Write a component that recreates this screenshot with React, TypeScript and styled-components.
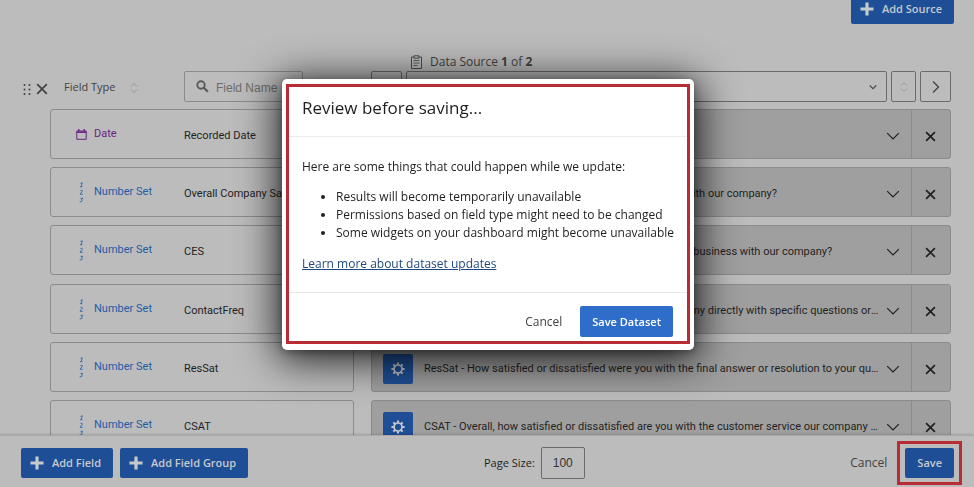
import React from "react";
import styled, { createGlobalStyle, css } from "styled-components";

const font = `"Open Sans", "Noto Sans", sans-serif`;
const rowFont = `Roboto, "Open Sans", sans-serif`;
const inputFont = `"Liberation Sans", Arial, sans-serif`;

const color = {
  page: "#bcbcbc",
  source: "#9f9f9f",
  line: "#8b8b8b",
  control: "#6b6b6b",
  text: "#1f1f1f",
  muted: "#424242",
  blue: "#1e4f96",
  link: "#205ca6",
  purple: "#6b2285",
  frame: "#b92c34",
};

const GlobalStyle = createGlobalStyle`
  *, *::before, *::after { box-sizing: border-box; }
  body { margin: 0; background: ${color.page}; overflow: hidden; }
  button, input, select { font: inherit; color: inherit; margin: 0; }
  button { cursor: pointer; }
`;

const Page = styled.div`
  display: flex;
  flex-direction: column;
  height: 100vh;
  background: ${color.page};
  color: ${color.text};
  font: 12px/18px ${font};
`;

const TopBar = styled.header`
  display: flex;
  justify-content: flex-end;
  align-items: flex-end;
  height: 24px;
  padding-right: 20px;
`;

const Primary = styled.button<{ $lit?: boolean }>`
  display: inline-flex;
  flex: none;
  align-items: center;
  gap: 8px;
  height: 30px;
  padding: 0 12px 0 9px;
  border: 0;
  border-radius: 2px;
  background: ${color.blue};
  color: #c6c9ce;
  font-size: 11px;
  font-weight: 600;
  white-space: nowrap;
  ${(p) =>
    p.$lit &&
    css`
      height: 31px;
      padding: 0 12px;
      background: #2f6dca;
      color: #fff;
    `}
`;

const Content = styled.main`
  flex: 1;
  min-height: 0;
  overflow: hidden;
  padding: 27px 23px 0 22px;
`;

const SourceCaption = styled.div`
  display: flex;
  align-items: center;
  gap: 8px;
  height: 20px;
  padding: 2px 0 0 389px;
  color: ${color.muted};
`;

const HeadRow = styled.div`
  display: grid;
  grid-template-columns: 28px 304px minmax(0, 1fr);
  height: 31px;
`;

const Handles = styled.div`
  display: flex;
  align-items: center;
  gap: 5px;
  padding-top: 5px;
  color: ${color.muted};
`;

const FieldHead = styled.div`
  display: flex;
  align-items: center;
  padding-left: 14px;
  color: ${color.muted};
`;

const FieldLabel = styled.span`
  width: 66px;
  font-size: 11px;
`;

const SortButton = styled.button`
  display: flex;
  padding: 3px 0 0;
  border: 0;
  background: none;
  color: #989898;
`;

const SearchBox = styled.label`
  display: flex;
  align-items: center;
  gap: 7px;
  width: 119px;
  height: 31px;
  margin-left: auto;
  margin-right: 51px;
  padding-left: 11px;
  border: 1px solid ${color.line};
  border-radius: 2px;
  color: #5a5a5a;
`;

const SearchInput = styled.input`
  flex: 1;
  width: 0;
  padding: 2px 0 0;
  border: 0;
  outline: 0;
  background: none;
  font: 12px/18px ${inputFont};
  &::placeholder { color: #6c6c6c; opacity: 1; }
`;

const SourceHead = styled.div`
  display: flex;
  gap: 4px;
  padding-left: 17px;
`;

const Square = styled.button<{ $narrow?: boolean }>`
  display: flex;
  flex: none;
  align-items: center;
  justify-content: center;
  width: ${(p) => (p.$narrow ? 25 : 31)}px;
  height: 31px;
  padding: 0;
  border: 1px solid ${color.control};
  border-radius: 2px;
  background: none;
  color: ${(p) => (p.$narrow ? "#989898" : "#444")};
`;

const SelectWrap = styled.label`
  display: grid;
  flex: 1;
  grid-template-columns: minmax(0, 1fr) 17px;
  align-items: center;
  height: 31px;
  border: 1px solid ${color.control};
  border-radius: 2px;
  color: #444;
  svg { grid-area: 1 / 2; pointer-events: none; }
`;

const Select = styled.select`
  grid-area: 1 / 1 / 2 / 3;
  height: 29px;
  padding: 0 10px;
  border: 0;
  appearance: none;
  background: none;
`;

const Rows = styled.ul`
  display: grid;
  gap: 8px;
  margin: 7px 0 0;
  padding: 0 0 0 28px;
  list-style: none;
  font: 11px/16px ${rowFont};
`;

const Row = styled.li`
  display: grid;
  grid-template-columns: 304px minmax(0, 1fr);
  column-gap: 17px;
  min-height: 50px;
  &:nth-child(3n) { margin-bottom: 1px; }
`;

const FieldCard = styled.div`
  display: grid;
  grid-template-columns: 43px 90px minmax(0, 1fr);
  align-items: center;
  border: 1px solid ${color.line};
  border-radius: 3px;
`;

const TypeIcon = styled.span<{ $date?: boolean }>`
  display: flex;
  justify-content: center;
  padding-left: ${(p) => (p.$date ? 18 : 17)}px;
`;

const TypeName = styled.span<{ $date?: boolean }>`
  color: ${(p) => (p.$date ? color.purple : color.link)};
`;

const FieldName = styled.span`
  padding-top: 4px;
  white-space: nowrap;
`;

const SourceCard = styled.div`
  display: grid;
  grid-template-columns: 30px minmax(0, 1fr) 30px 39px;
  align-items: stretch;
  padding-left: 11px;
  border: 1px solid ${color.line};
  border-radius: 3px;
  background: ${color.source};
`;

const Gear = styled.button`
  display: flex;
  align-items: center;
  justify-content: center;
  align-self: end;
  height: 30px;
  margin-bottom: 7px;
  padding: 0;
  border: 0;
  border-radius: 2px;
  background: ${color.blue};
  color: #c6c9ce;
`;

const Question = styled.span`
  align-self: center;
  margin-left: 11px;
  padding-top: 3px;
  overflow: hidden;
  text-overflow: ellipsis;
  white-space: nowrap;
`;

const CellButton = styled.button<{ $ruled?: boolean }>`
  display: flex;
  align-items: center;
  justify-content: center;
  padding: 4px ${(p) => (p.$ruled ? 2 : 6)}px 0 0;
  border: 0;
  border-left: ${(p) => (p.$ruled ? `1px solid ${color.line}` : "0")};
  background: none;
`;

const Footer = styled.footer`
  display: grid;
  grid-template-columns: minmax(auto, 463px) auto 1fr;
  align-items: center;
  height: 52px;
  padding: 2px 20px 0 21px;
  border-top: 1px solid #a9a9a9;
  background: ${color.page};
  box-shadow: 0 -1px 2px rgba(0, 0, 0, 0.14);
`;

const Group = styled.div<{ $end?: boolean }>`
  display: flex;
  align-items: center;
  justify-content: ${(p) => (p.$end ? "flex-end" : "flex-start")};
  gap: ${(p) => (p.$end ? 18 : 7)}px;
`;

const PageSize = styled.label`
  display: flex;
  align-items: center;
  gap: 6px;
  font-size: 11px;
`;

const SizeInput = styled.input`
  width: 44px;
  height: 32px;
  padding: 0;
  border: 1px solid ${color.control};
  border-radius: 2px;
  background: none;
  color: #333;
  font: 12px/18px ${inputFont};
  text-align: center;
`;

const Plain = styled.button`
  padding: 0;
  border: 0;
  background: none;
  color: ${color.muted};
`;

const SaveButton = styled(Primary)`
  position: relative;
  padding: 0 12px;
  &::after {
    content: "";
    position: absolute;
    inset: -7px -8px;
    border: 3px solid ${color.frame};
    pointer-events: none;
  }
`;

const Overlay = styled.div`
  position: fixed;
  inset: 0;
  display: flex;
  align-items: flex-start;
  justify-content: center;
  padding: 79px 0 0 2px;
`;

const Dialog = styled.section`
  width: 412px;
  padding: 5px 4px 6px;
  border-radius: 5px;
  background: #fff;
  box-shadow: 0 6px 40px 4px rgba(0, 0, 0, 0.85), 0 2px 8px rgba(0, 0, 0, 0.3);
`;

const Frame = styled.div`
  border: 3px solid ${color.frame};
`;

const DialogTitle = styled.h1`
  margin: 0;
  padding: 8px 13px 16px;
  border-bottom: 1px solid #ececec;
  font: 400 17px/25px ${font};
`;

const DialogBody = styled.div`
  padding: 21px 8px 19px 13px;
`;

const Text = styled.p`
  margin: 0;
`;

const Bullets = styled.ul`
  margin: 12px 0 13px;
  padding-left: 34px;
`;

const DocLink = styled.a`
  color: #1f477d;
`;

const DialogFooter = styled.div`
  display: flex;
  align-items: center;
  justify-content: flex-end;
  gap: 18px;
  padding: 13px 14px 4px;
  border-top: 1px solid #e6e6e6;
`;

const Plus = () => (
  <svg width="14" height="14" viewBox="0 0 14 14" fill="currentColor" aria-hidden="true">
    <path d="M5.4 0.5h3.200v4.900h4.900v3.200H8.600v4.900H5.400V8.600H.5V5.400h4.900z" />
  </svg>
);

const Cross = ({ size = 11, weight = 1.8 }: { size?: number; weight?: number }) => (
  <svg width={size} height={size} viewBox="0 0 12 12" fill="none" stroke="currentColor" strokeWidth={weight} aria-hidden="true">
    <path d="M1.200 1.200l9.600 9.600M10.800 1.200l-9.600 9.600" />
  </svg>
);

const Chevron = ({ size = 14, weight = 1.2 }: { size?: number; weight?: number }) => (
  <svg width={size} height={size} viewBox="0 0 14 14" fill="none" stroke="currentColor" strokeWidth={weight} aria-hidden="true">
    <path d="M1.200 4.200L7 10l5.800-5.800" />
  </svg>
);

const ChevronRight = () => (
  <svg width="14" height="14" viewBox="0 0 14 14" fill="none" stroke="currentColor" strokeWidth="1.4" aria-hidden="true">
    <path d="M4 1.500L9.500 7 4 12.500" />
  </svg>
);

const Sort = () => (
  <svg width="8" height="12" viewBox="0 0 8 12" fill="none" stroke="currentColor" strokeWidth="1" aria-hidden="true">
    <path d="M1 4.500L4 1.500l3 3M1 7.500l3 3 3-3" />
  </svg>
);

const Grip = () => (
  <svg width="9" height="13" viewBox="0 0 9 13" fill="currentColor" aria-hidden="true">
    {[2, 6.5, 11].map((y) => (
      <React.Fragment key={y}>
        <circle cx="2.500" cy={y} r="1" />
        <circle cx="7.500" cy={y} r="1" />
      </React.Fragment>
    ))}
  </svg>
);

const Search = () => (
  <svg width="13" height="13" viewBox="0 0 13 13" fill="none" stroke="currentColor" aria-hidden="true">
    <circle cx="5" cy="5" r="3.700" strokeWidth="1.900" />
    <path d="M7.800 7.800l4 4" strokeWidth="2.300" />
  </svg>
);

const Clipboard = () => (
  <svg width="11" height="14" viewBox="0 0 11 14" fill="none" stroke="currentColor" strokeWidth=".9" aria-hidden="true">
    <path d="M3 2H.5v11.500h10V2H8M3 .8h5v2.400H3z" />
    <path d="M2.500 5.500h6M2.500 8h6M2.500 10.500h4" strokeWidth=".8" />
  </svg>
);

const CalendarIcon = () => (
  <svg width="11" height="11" viewBox="0 0 11 11" fill="none" stroke={color.purple} aria-hidden="true">
    <path d="M.8 2h9.400v8.300H.8z" strokeWidth="1" />
    <path d="M.8 3.200h9.400" strokeWidth="1.600" />
    <path d="M2.800 0v2M8.200 0v2" strokeWidth="1.300" />
  </svg>
);

const NumberIcon = () => (
  <svg width="5" height="21" viewBox="0 0 5 21" fill="none" stroke={color.link} strokeWidth="0.8" aria-hidden="true">
    <path d="M1.500 1.500L3.300.7 2.200 4.700M1 4.700h2.300" />
    <path d="M1.300 9c.8-1.300 2.500-.8 2 .3L1 12.300h2.700" />
    <path d="M1.500 16.300h2.300L2.400 18c1.500 0 1.200 2.200-1.700 1.800" />
  </svg>
);

const GearIcon = () => (
  <svg width="14" height="14" viewBox="0 0 14 14" fill="none" stroke="currentColor" aria-hidden="true">
    <circle cx="7" cy="7" r="4" strokeWidth="1.700" />
    {[0, 45, 90, 135, 180, 225, 270, 315].map((a) => (
      <path key={a} d="M7 2.800V.4" strokeWidth="2" transform={`rotate(${a} 7 7)`} />
    ))}
  </svg>
);

const fields = [
  { type: "Date", name: "Recorded Date", question: "Recorded Date" },
  { type: "Number Set", name: "Overall Company Satisfaction", question: "Overall Company Satisfaction - How satisfied are you with our company?" },
  { type: "Number Set", name: "CES", question: "CES - How easy or difficult has it been for anyone to do business with our company?" },
  { type: "Number Set", name: "ContactFreq", question: "ContactFreq - How often do we interact with our company directly with specific questions or concerns?" },
  { type: "Number Set", name: "ResSat", question: "ResSat - How satisfied or dissatisfied were you with the final answer or resolution to your question?" },
  { type: "Number Set", name: "CSAT", question: "CSAT - Overall, how satisfied or dissatisfied are you with the customer service our company provides?" },
];

export default function App() {
  return (
    <Page>
      <GlobalStyle />
      <TopBar>
        <Primary><Plus />Add Source</Primary>
      </TopBar>
      <Content>
        <SourceCaption>
          <Clipboard />
          <span>Data Source <b>1</b> of <b>2</b></span>
        </SourceCaption>
        <HeadRow>
          <Handles><Grip /><Cross size={12} weight={1.7} /></Handles>
          <FieldHead>
            <FieldLabel>Field Type</FieldLabel>
            <SortButton aria-label="Sort by field type"><Sort /></SortButton>
            <SearchBox>
              <Search />
              <SearchInput placeholder="Field Name" aria-label="Field Name" />
            </SearchBox>
          </FieldHead>
          <SourceHead>
            <Square aria-label="Previous source" />
            <SelectWrap>
              <Select aria-label="Data source"><option /></Select>
              <Chevron size={8} weight={2} />
            </SelectWrap>
            <Square $narrow aria-label="Sort by source"><Sort /></Square>
            <Square aria-label="Next source"><ChevronRight /></Square>
          </SourceHead>
        </HeadRow>
        <Rows>
          {fields.map((f) => {
            const date = f.type === "Date";
            return (
              <Row key={f.name}>
                <FieldCard>
                  <TypeIcon $date={date}>{date ? <CalendarIcon /> : <NumberIcon />}</TypeIcon>
                  <TypeName $date={date}>{f.type}</TypeName>
                  <FieldName>{f.name}</FieldName>
                </FieldCard>
                <SourceCard>
                  <Gear aria-label="Field settings"><GearIcon /></Gear>
                  <Question>{f.question}</Question>
                  <CellButton aria-label="Choose source field"><Chevron /></CellButton>
                  <CellButton $ruled aria-label="Remove source field"><Cross /></CellButton>
                </SourceCard>
              </Row>
            );
          })}
        </Rows>
      </Content>
      <Footer>
        <Group>
          <Primary><Plus />Add Field</Primary>
          <Primary><Plus />Add Field Group</Primary>
        </Group>
        <PageSize>
          Page Size:
          <SizeInput defaultValue="100" />
        </PageSize>
        <Group $end>
          <Plain>Cancel</Plain>
          <SaveButton>Save</SaveButton>
        </Group>
      </Footer>
      <Overlay>
        <Dialog role="dialog" aria-modal="true" aria-labelledby="dialog-title">
          <Frame>
            <DialogTitle id="dialog-title">Review before saving...</DialogTitle>
            <DialogBody>
              <Text>Here are some things that could happen while we update:</Text>
              <Bullets>
                <li>Results will become temporarily unavailable</li>
                <li>Permissions based on field type might need to be changed</li>
                <li>Some widgets on your dashboard might become unavailable</li>
              </Bullets>
              <DocLink href="#dataset-updates">Learn more about dataset updates</DocLink>
            </DialogBody>
            <DialogFooter>
              <Plain>Cancel</Plain>
              <Primary $lit>Save Dataset</Primary>
            </DialogFooter>
          </Frame>
        </Dialog>
      </Overlay>
    </Page>
  );
}
